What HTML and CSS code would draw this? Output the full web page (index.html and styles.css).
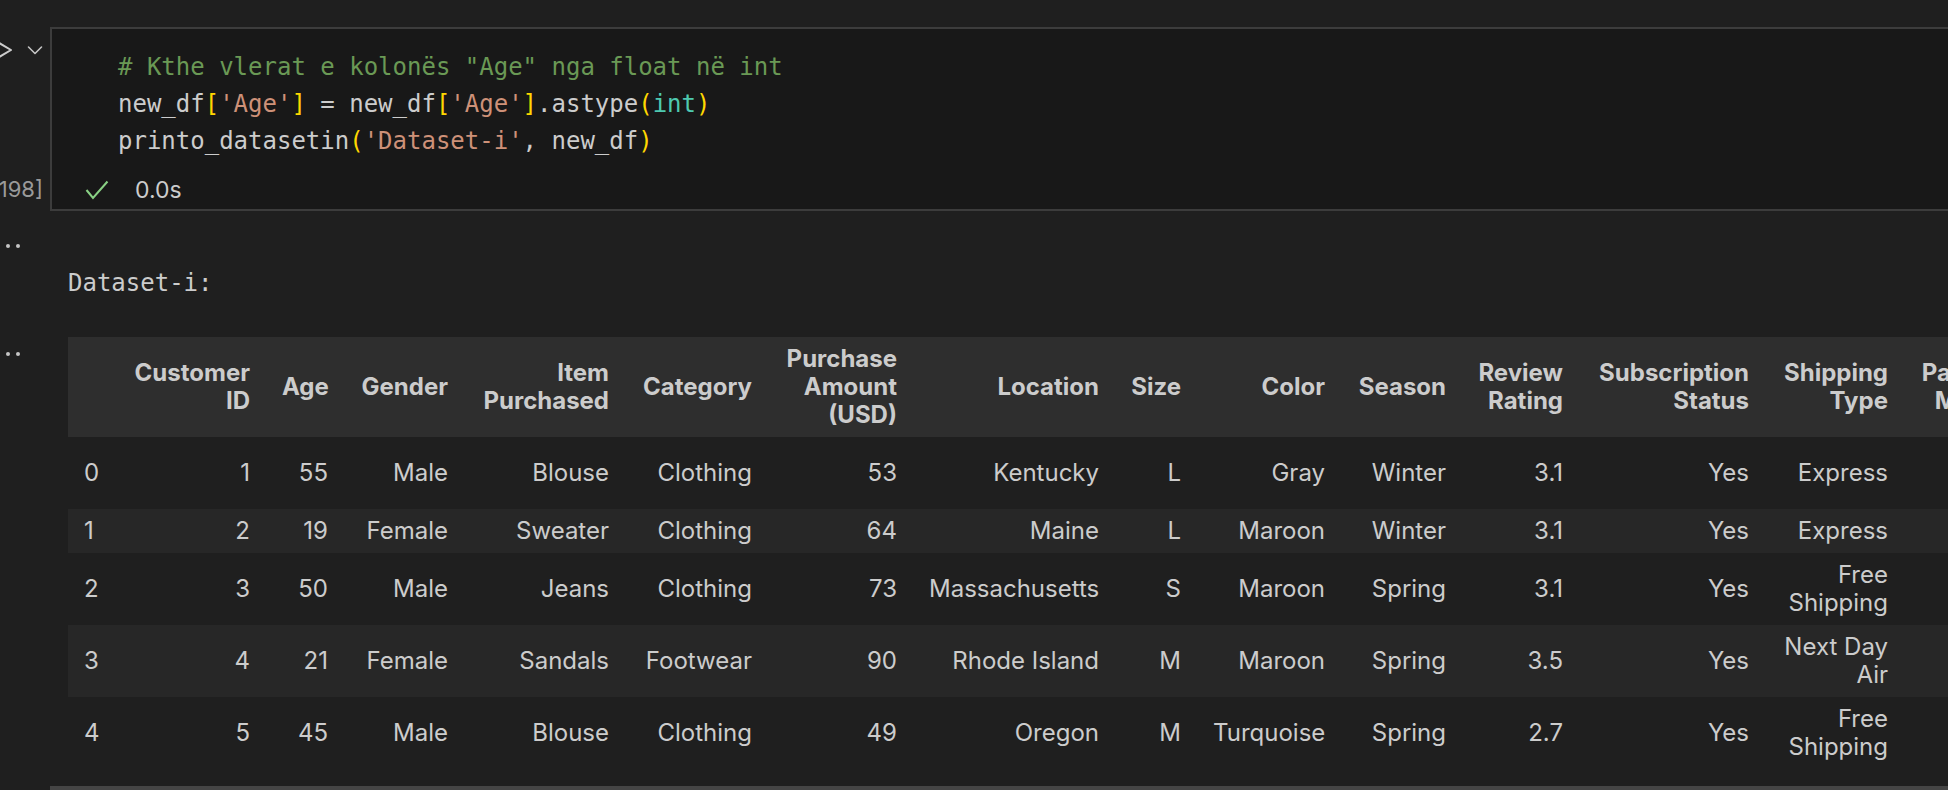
FILE: index.html
```html
<!DOCTYPE html>
<html lang="sq">
<head>
<meta charset="utf-8">
<title>Notebook</title>
<link rel="stylesheet" href="styles.css">
</head>
<body>
<div class="notebook">
  <div class="code-cell">
    <div class="gutter">
      <div class="gutter-top">
        <svg class="run" viewBox="0 0 16 20"><polygon points="1.5,2 15,10 1.5,18" fill="none" stroke="#cccccc" stroke-width="2" stroke-linejoin="round"/></svg>
        <svg class="chev" viewBox="0 0 16 10"><path d="M1.5 2 L8 8.5 L14.5 2" fill="none" stroke="#c5c5c5" stroke-width="1.6" stroke-linecap="round" stroke-linejoin="round"/></svg>
      </div>
      <div class="exec-count">[198]</div>
    </div>
    <div class="editor">
      <div class="code">
        <div class="line"><span class="tk-c"># Kthe vlerat e kolonës "Age" nga float në int</span></div>
        <div class="line">new_df<span class="tk-b">[</span><span class="tk-s">'Age'</span><span class="tk-b">]</span> = new_df<span class="tk-b">[</span><span class="tk-s">'Age'</span><span class="tk-b">]</span>.astype<span class="tk-b">(</span><span class="tk-t">int</span><span class="tk-b">)</span></div>
        <div class="line">printo_datasetin<span class="tk-b">(</span><span class="tk-s">'Dataset-i'</span>, new_df<span class="tk-b">)</span></div>
      </div>
      <div class="status">
        <svg class="check" viewBox="0 0 24 20"><path d="M1.5 10 L8 18 L22.5 1.5" fill="none" stroke="#89d185" stroke-width="2"/></svg>
        <span class="time">0.0s</span>
      </div>
    </div>
  </div>

  <div class="output first">
    <div class="out-gutter"><span class="dot"></span><span class="dot"></span></div>
    <div class="stream">Dataset-i:</div>
  </div>

  <div class="output">
    <div class="out-gutter"><span class="dot"></span><span class="dot"></span></div>
    <div class="html-out">
      <table class="dataframe">
        <colgroup>
          <col class="w-idx"><col class="w-cid"><col class="w-age"><col class="w-gen"><col class="w-item"><col class="w-cat"><col class="w-amt"><col class="w-loc"><col class="w-size"><col class="w-col"><col class="w-sea"><col class="w-rev"><col class="w-sub"><col class="w-ship"><col class="w-pay"><col class="w-freq">
        </colgroup>
        <thead>
          <tr>
            <th></th><th>Customer ID</th><th>Age</th><th>Gender</th><th>Item Purchased</th><th>Category</th><th>Purchase Amount (USD)</th><th>Location</th><th>Size</th><th>Color</th><th>Season</th><th>Review Rating</th><th>Subscription Status</th><th>Shipping Type</th><th>Payment Method</th><th>Frequency of Purchases</th>
          </tr>
        </thead>
        <tbody>
          <tr><th>0</th><td>1</td><td>55</td><td>Male</td><td>Blouse</td><td>Clothing</td><td>53</td><td>Kentucky</td><td>L</td><td>Gray</td><td>Winter</td><td>3.1</td><td>Yes</td><td>Express</td><td>Credit Card</td><td>Fortnightly</td></tr>
          <tr><th>1</th><td>2</td><td>19</td><td>Female</td><td>Sweater</td><td>Clothing</td><td>64</td><td>Maine</td><td>L</td><td>Maroon</td><td>Winter</td><td>3.1</td><td>Yes</td><td>Express</td><td>Cash</td><td>Fortnightly</td></tr>
          <tr><th>2</th><td>3</td><td>50</td><td>Male</td><td>Jeans</td><td>Clothing</td><td>73</td><td>Massachusetts</td><td>S</td><td>Maroon</td><td>Spring</td><td>3.1</td><td>Yes</td><td>Free Shipping</td><td>Cash</td><td>Weekly</td></tr>
          <tr><th>3</th><td>4</td><td>21</td><td>Female</td><td>Sandals</td><td>Footwear</td><td>90</td><td>Rhode Island</td><td>M</td><td>Maroon</td><td>Spring</td><td>3.5</td><td>Yes</td><td>Next Day Air</td><td>Cash</td><td>Weekly</td></tr>
          <tr><th>4</th><td>5</td><td>45</td><td>Male</td><td>Blouse</td><td>Clothing</td><td>49</td><td>Oregon</td><td>M</td><td>Turquoise</td><td>Spring</td><td>2.7</td><td>Yes</td><td>Free Shipping</td><td>Cash</td><td>Annually</td></tr>
        </tbody>
      </table>
    </div>
  </div>

  <div class="hscroll"></div>
</div>
</body>
</html>
```

FILE: styles.css
```css
* { box-sizing: border-box; }

html, body {
  margin: 0;
  padding: 0;
}

body {
  width: 1948px;
  height: 790px;
  overflow: hidden;
  background: #1f1f1f;
  color: #cccccc;
  font-family: Inter, "Liberation Sans", sans-serif;
}

.notebook {
  padding-top: 27px;
}

/* ---------- code cell ---------- */
.code-cell {
  display: flex;
}

.gutter {
  width: 50px;
  flex: none;
  display: flex;
  flex-direction: column;
  justify-content: space-between;
}

.gutter-top {
  display: flex;
  align-items: center;
  gap: 15px;
  margin-top: 13px;
}

.run {
  width: 16px;
  height: 20px;
  margin-left: -4px;
  flex: none;
}

.chev {
  width: 16px;
  height: 10px;
  flex: none;
}

.exec-count {
  display: flex;
  justify-content: flex-end;
  padding-right: 7px;
  margin-bottom: 6px;
  white-space: nowrap;
  font-family: Inter, "Liberation Sans", sans-serif;
  font-size: 22px;
  line-height: 32px;
  color: #9a9a9a;
}

.editor {
  width: 1920px;
  flex: none;
  height: 184px;
  background: #181818;
  border: 2px solid #3c3c3c;
}

.code {
  padding: 20px 0 0 66px;
  font-family: "DejaVu Sans Mono", monospace;
  font-size: 24px;
  line-height: 37px;
  color: #cccccc;
}

.line {
  height: 37px;
  white-space: pre;
}

.tk-c { color: #6a9955; }
.tk-s { color: #ce9178; }
.tk-b { color: #ffd700; }
.tk-t { color: #4ec9b0; }

.status {
  display: flex;
  align-items: center;
  height: 32px;
  margin-top: 14px;
  padding-left: 33px;
}

.check {
  width: 24px;
  height: 20px;
  flex: none;
}

.time {
  margin-left: 26px;
  font-size: 23px;
  color: #cccccc;
}

/* ---------- outputs ---------- */
.output {
  display: flex;
}

.output.first {
  margin-top: 18px;
}

.out-gutter {
  width: 50px;
  flex: none;
  display: flex;
  align-items: flex-start;
  gap: 6px;
  padding-left: 6px;
  padding-top: 15px;
}

.dot {
  width: 4px;
  height: 4px;
  border-radius: 50%;
  background: #c5c5c5;
}

.stream {
  margin-left: 18px;
  padding: 36px 0;
  font-family: "DejaVu Sans Mono", monospace;
  font-size: 24px;
  line-height: 36px;
  white-space: pre;
  color: #cccccc;
}

.html-out {
  margin-left: 18px;
  width: 1880px;
  flex: none;
  overflow: hidden;
}

/* ---------- dataframe ---------- */
.dataframe {
  border-collapse: collapse;
  table-layout: fixed;
  width: 2123px;
  font-size: 24px;
  line-height: 28px;
  color: #cccccc;
}

.dataframe th,
.dataframe td {
  padding: 8px 16px;
  text-align: right;
  vertical-align: middle;
}

.dataframe thead th {
  font-weight: 700;
  background: #2e2e2e;
}

.dataframe tbody th {
  font-weight: 400;
  text-align: left;
}

.dataframe tbody tr:nth-child(even) {
  background: #272727;
}

.w-idx  { width: 48px; }
.w-cid  { width: 150px; }
.w-age  { width: 78px; }
.w-gen  { width: 120px; }
.w-item { width: 161px; }
.w-cat  { width: 143px; }
.w-amt  { width: 145px; }
.w-loc  { width: 202px; }
.w-size { width: 82px; }
.w-col  { width: 144px; }
.w-sea  { width: 121px; }
.w-rev  { width: 117px; }
.w-sub  { width: 186px; }
.w-ship { width: 139px; }
.w-pay  { width: 137px; }
.w-freq { width: 150px; }

.hscroll {
  margin: 17px 0 0 50px;
  height: 10px;
  background: #454545;
}
```
